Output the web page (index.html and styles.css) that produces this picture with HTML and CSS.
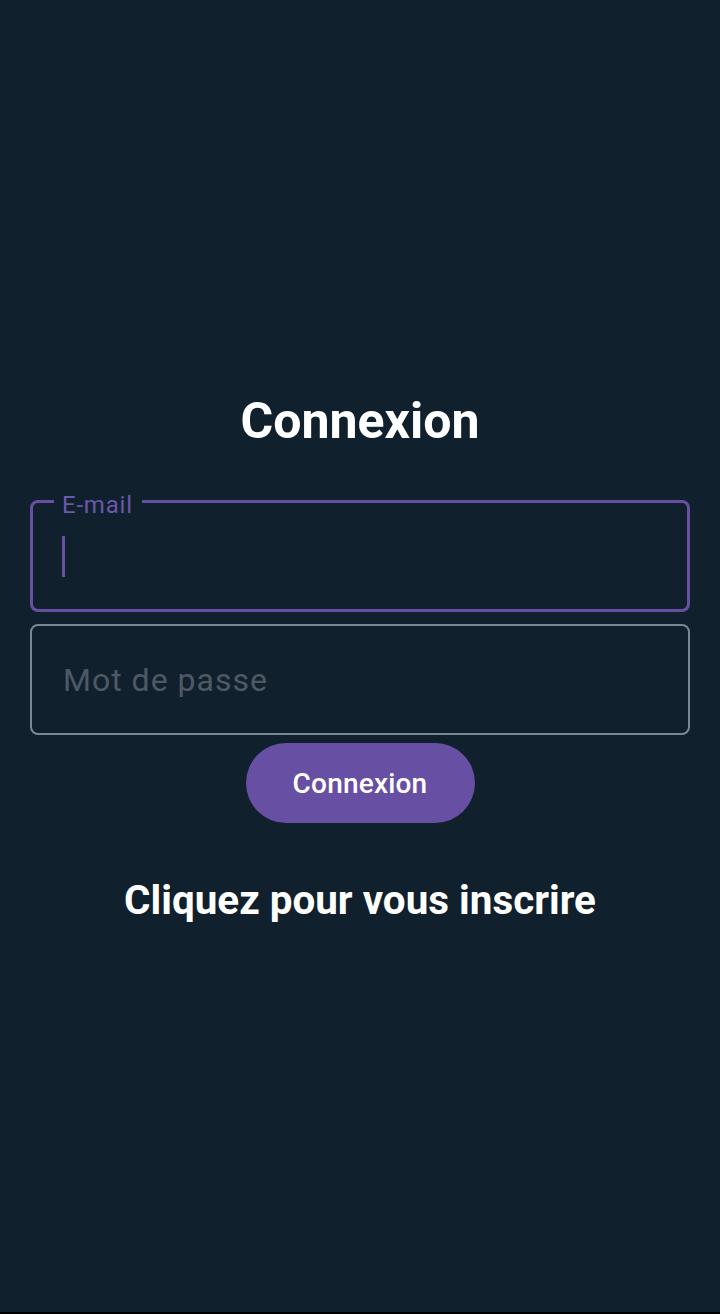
FILE: index.html
```html
<!DOCTYPE html>
<html lang="fr">
<head>
<meta charset="utf-8">
<title>Connexion</title>
<link rel="stylesheet" href="styles.css">
</head>
<body>
<main class="login">
  <h1 class="title">Connexion</h1>
  <div class="field field--focused">
    <span class="field-label">E-mail</span>
    <span class="caret"></span>
  </div>
  <div class="field field--idle">
    <span class="placeholder">Mot de passe</span>
  </div>
  <button class="btn" type="button">Connexion</button>
  <p class="signup">Cliquez pour vous inscrire</p>
</main>
</body>
</html>
```

FILE: styles.css
```css
html {
  background: #000;
}

body {
  margin: 0;
  height: 1312px;
  background: #11202d;
  font-family: Roboto, "Noto Sans", sans-serif;
}

.login {
  display: flex;
  flex-direction: column;
  padding: 392px 30px 0;
}

.title {
  margin: 0;
  font-weight: 700;
  font-size: 50px;
  line-height: 58px;
  text-align: center;
  color: #ffffff;
}

.field {
  position: relative;
  box-sizing: border-box;
  height: 112px;
  border-radius: 8px;
  display: flex;
  align-items: center;
}

.field--focused {
  margin-top: 50px;
  border: 3px solid #6750a4;
  padding-left: 29px;
}

.field--idle {
  margin-top: 12px;
  height: 111px;
  border: 2px solid #7d8794;
  padding-left: 31px;
}

.field-label {
  position: absolute;
  top: -8px;
  left: 21px;
  padding: 0 9px 0 8px;
  background: #11202d;
  color: #6a58a8;
  font-size: 24px;
  line-height: 20px;
  letter-spacing: 0.8px;
}

.caret {
  width: 3px;
  height: 41px;
  background: #6750a4;
}

.placeholder {
  color: #4f5964;
  font-size: 32px;
  letter-spacing: 1px;
}

.btn {
  align-self: center;
  margin-top: 8px;
  width: 229px;
  height: 80px;
  border: none;
  border-radius: 40px;
  background: #6750a4;
  color: #ffffff;
  font-family: Roboto, sans-serif;
  font-weight: 500;
  font-size: 28px;
  letter-spacing: 0.2px;
}

.signup {
  margin: 54px 0 0;
  font-weight: 700;
  font-size: 40.4px;
  line-height: 48px;
  text-align: center;
  color: #ffffff;
}
```
